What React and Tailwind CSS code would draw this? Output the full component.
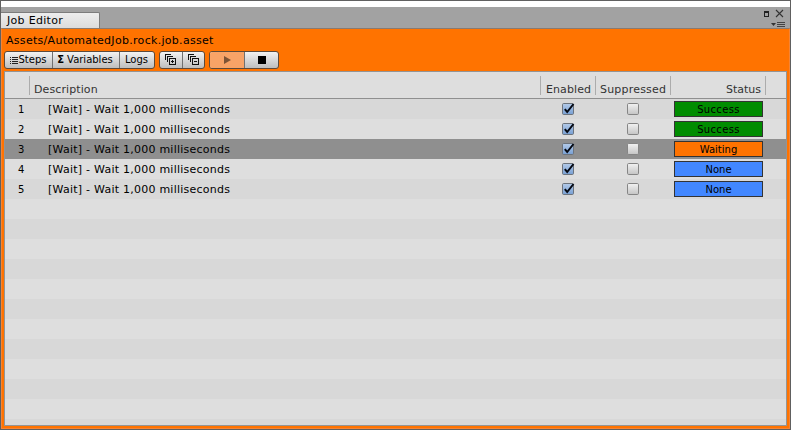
const rows = [
  ['Success', 'bg-[#008c00] tracking-[0.35px]'],
  ['Success', 'bg-[#008c00] tracking-[0.35px]'],
  ['Waiting', 'bg-[#ff7300]'],
  ['None', 'bg-[#4287ff]'],
  ['None', 'bg-[#4287ff]'],
];

function Checkbox({ checked }) {
  return (
    <svg width="14" height="14" viewBox="0 0 14 14" className="block">
      <defs>
        <linearGradient id="on" x1="0" y1="0" x2="0" y2="1">
          <stop offset="0" stopColor="#b4cbe9" />
          <stop offset="1" stopColor="#779fd3" />
        </linearGradient>
        <linearGradient id="off" x1="0" y1="0" x2="0" y2="1">
          <stop offset="0" stopColor="#f2f2f2" />
          <stop offset="1" stopColor="#c4c4c4" />
        </linearGradient>
      </defs>
      <rect x="0.5" y="1.5" width="11" height="11" rx="1.2" fill={checked ? 'url(#on)' : 'url(#off)'} stroke={checked ? '#6c737c' : '#858585'} />
      {checked && <path d="M2.8 7.2 5.2 10 11.5 2" fill="none" stroke="#050a14" strokeWidth="2" />}
    </svg>
  );
}

function FoldIcon({ plus }) {
  return (
    <svg width="11" height="11" viewBox="0 0 11 11" className="mr-px mb-px block" fill="none" stroke="#111" shapeRendering="crispEdges">
      <path d="M0.5 6V0.5H6M2.5 8V2.5H8M4.5 4.5H10.5V10.5H4.5Z" />
      <path d={plus ? 'M6 7.5H9M7.5 6V9' : 'M6 7.5H9'} />
    </svg>
  );
}

const button = 'flex h-full items-center justify-center border-r border-[#707070] last:border-r-0';
const group = 'flex h-[18px] overflow-hidden rounded-[3px] border border-[#5c4a3c] bg-linear-to-b from-[#f2f2f2] to-[#bebebe]';

export default function App() {
  return (
    <div className="flex h-[430px] w-[791px] flex-col overflow-hidden border border-[#606060] bg-white pt-[6px] font-['DejaVu_Sans',Verdana,sans-serif] text-[11px] leading-[14px] text-black">
      <div className="flex h-[21px] shrink-0 justify-between bg-[#a2a2a2]">
        <div className="mt-[5px] h-4 w-[99px] rounded-tr-[2px] border-t border-r border-[#7c7c7c] bg-linear-to-b from-[#ededed] to-[#dcdcdc] pl-[6px] pt-px leading-[14px] tracking-[0.3px] whitespace-nowrap">
          Job Editor
        </div>
        <svg width="27" height="21" viewBox="0 0 27 21" className="mr-0.5">
          <path d="M3.500 5v4h4V5" fill="none" stroke="#222" shapeRendering="crispEdges" />
          <path d="M3 5h5" stroke="#222" strokeWidth="2" shapeRendering="crispEdges" />
          <path d="m15 3 7 7m0-7-7 7" stroke="#333" strokeWidth="1.1" />
          <path d="M10 16h5l-2.500 3z" fill="#333" />
          <path d="M16 15.500h8M16 17.500h8M16 19.500h8" stroke="#444" shapeRendering="crispEdges" />
        </svg>
      </div>
      <div className="flex min-h-0 flex-1 flex-col border-x border-y border-t-[#8a7a70] border-x-[#f58435] border-b-[#f58435] bg-[#ff7300] px-[2px] pb-[2px]">
        <div className="h-[22px] shrink-0 pl-[2px] pt-[5px] tracking-[0.3px] whitespace-nowrap">Assets/AutomatedJob.rock.job.asset</div>
        <div className="flex h-5 shrink-0 text-[10px]">
          <div className={group + ' w-[151px]'}>
            <div className={button + ' w-12 pr-px'}>
              <svg width="9" height="9" viewBox="0 0 9 9" stroke="#222" shapeRendering="crispEdges">
                <path d="M0 1.500h1M2 1.500h6M0 3.500h1M2 3.500h6M0 5.500h1M2 5.500h6M0 7.500h1M2 7.500h6" />
              </svg>
              <span>Steps</span>
            </div>
            <div className={button + ' w-[67px] gap-[3px] pr-0.5'}><span className="font-bold">Σ</span><span>Variables</span></div>
            <div className={button + ' flex-1 pr-px'}>Logs</div>
          </div>
          <div className={group + ' ml-1 w-[46px]'}>
            <div className={button + ' w-[23px]'}><FoldIcon plus /></div>
            <div className={button + ' flex-1'}><FoldIcon /></div>
          </div>
          <div className={group + ' ml-1 w-[70px]'}>
            <div className={button + ' w-[35px] bg-[#f8a367]'}>
              <svg width="8" height="8" viewBox="0 0 8 8"><path d="M1 0 8 4 1 8z" fill="#7d5335" /></svg>
            </div>
            <div className={button + ' flex-1'}><div className="size-2 bg-black" /></div>
          </div>
        </div>
        <div className="flex min-h-0 flex-1 flex-col overflow-hidden border border-[#949494] bg-[#dedede]">
          <div className="flex h-[27px] shrink-0 border-b border-[#8f8f8f] pt-1 text-[#333]">
            <div className="h-[19px] w-[25px] border-r border-[#acacac]" />
            <div className="h-[19px] w-[511px] border-r border-[#acacac] pl-1 pt-[7px] tracking-[0.1px]">Description</div>
            <div className="h-[19px] w-[55px] border-r border-[#acacac] pl-[5px] pt-[7px] tracking-[0.1px]">Enabled</div>
            <div className="h-[19px] w-[75px] border-r border-[#acacac] pl-1 pt-[7px] tracking-[0.2px]">Suppressed</div>
            <div className="h-[19px] w-[95px] border-r border-[#acacac] pr-1 pt-[7px] text-right">Status</div>
          </div>
          {Array.from({ length: 17 }, (_, i) => (
            <div key={i} className={'flex h-5 shrink-0 items-center ' + (i === 2 ? 'bg-[#8f8f8f]' : i % 2 ? 'bg-[#dedede]' : 'bg-[#d8d8d8]')}>
              {rows[i] && (
                <>
                  <div className="w-[43px] pl-[13px] pt-0.5 text-[10px]">{i + 1}</div>
                  <div className="w-[514px] pt-0.5 tracking-[0.24px] whitespace-nowrap">[Wait] - Wait 1,000 milliseconds</div>
                  <div className="w-[65px]"><Checkbox checked /></div>
                  <div className="w-[47px]"><Checkbox /></div>
                  <div className={'flex h-4 w-[89px] items-center justify-center border border-[#333] pt-px text-[10px] ' + rows[i][1]}>{rows[i][0]}</div>
                </>
              )}
            </div>
          ))}
        </div>
      </div>
    </div>
  );
}
